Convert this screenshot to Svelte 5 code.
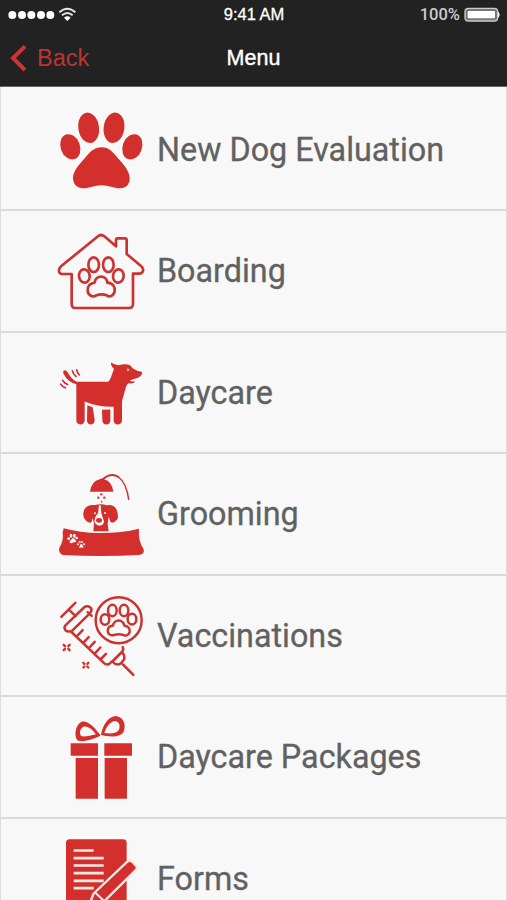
<script>
  const items = [
    { icon: 'paw', label: 'New Dog Evaluation', top: -31.5 },
    { icon: 'house', label: 'Boarding', top: -42 },
    { icon: 'dog', label: 'Daycare', top: -52.5 },
    { icon: 'groom', label: 'Grooming', top: -33 },
    { icon: 'vaccine', label: 'Vaccinations', top: -28.5 },
    { icon: 'gift', label: 'Daycare Packages', top: -24 },
    { icon: 'form', label: 'Forms', top: 25.5 }
  ];
</script>

<div class="screen">
  <header>
    <div class="status">
      <div class="signal">
        <svg width="70" height="16" viewBox="0 0 210 48">
          <g fill="#fff">
            <circle cx="13" cy="24" r="12" />
            <circle cx="42" cy="24" r="12" />
            <circle cx="70" cy="24" r="12" />
            <circle cx="99" cy="24" r="12" />
            <circle cx="127" cy="24" r="12" />
          </g>
          <g fill="none" stroke="#e4e4e4" stroke-width="6">
            <path d="M154 16 Q178 -5 202 16" />
            <path d="M162 25 Q178 11 194 25" />
          </g>
          <path d="M168 32 Q178 24 188 32 L178 42 Z" fill="#fff" />
        </svg>
      </div>
      <div class="time">9:41 AM</div>
      <div class="battery">
        <span>100%</span>
        <svg width="36" height="16" viewBox="0 0 108 48">
          <rect x="3" y="4" width="98" height="38" rx="10" fill="#777" stroke="#ccc" stroke-width="4" />
          <rect x="11" y="12" width="82" height="22" rx="3" fill="#fff" />
          <path d="M103 15 Q109 23 103 31 Z" fill="#fff" stroke="#fff" stroke-width="2" />
        </svg>
      </div>
    </div>
    <nav>
      <button class="back">
        <svg width="17" height="28" viewBox="0 0 51 84">
          <path d="M48 7 L12 42 L48 78" fill="none" stroke="#cc3531" stroke-width="12" />
        </svg>
        <span>Back</span>
      </button>
      <h1>Menu</h1>
    </nav>
  </header>

  <ul>
    {#each items as { icon, label, top }}
      <li>
        <svg class="icon" viewBox="0 {top} 330 358.5">
          {#if icon === 'paw'}
            <g class="fill">
              <ellipse cx="116" cy="82" rx="31" ry="46" transform="rotate(-8 116 82)" />
              <ellipse cx="192" cy="82" rx="31" ry="46" transform="rotate(8 192 82)" />
              <ellipse cx="61" cy="139" rx="29" ry="39" transform="rotate(-20 61 139)" />
              <ellipse cx="247" cy="139" rx="29" ry="39" transform="rotate(20 247 139)" />
              <path d="M155 140 C173 140 185 150 197 165 C216 188 239 208 239 234 C239 250 230 262 214 263 C194 265 178 254 154 254 C131 254 116 265 96 263 C79 262 69 249 69 232 C69 209 93 187 111 165 C124 149 137 140 155 140 Z" />
            </g>
          {:else if icon === 'house'}
            <g class="line" stroke-width="8">
              <path d="M65 147 H37 Q26 147 27 134 Q28 128 34 123 L144 34 Q153 26 163 34 L198 64 V45 Q198 40 203 40 H225 Q230 40 230 45 V87 L273 123 Q281 129 279 137 Q277 146 267 146 H249 V237 Q249 249 237 249 H76 Q65 249 65 237 Z" />
              <ellipse cx="131" cy="119" rx="16" ry="22" />
              <ellipse cx="175" cy="119" rx="16" ry="22" />
              <ellipse cx="103" cy="153" rx="16" ry="20" transform="rotate(-8 103 153)" />
              <ellipse cx="205" cy="153" rx="16" ry="20" transform="rotate(8 205 153)" />
              <path d="M153 155 C163 155 171 162 172 173 C189 174 196 186 194 199 C191 214 178 217 170 211 Q155 205 139 211 C128 218 115 212 113 198 C111 184 121 174 134 173 C135 162 143 155 153 155 Z" />
            </g>
          {:else if icon === 'dog'}
            <path class="fill" d="M40 61 Q46 56 53 65 Q63 85 80 94 H173 Q179 91 184 77 L192 55 Q182 48 183 36 Q193 43 205 44 Q227 38 240 44 Q251 59 271 63 Q278 64 276 70 Q271 83 250 86 L239 90 Q246 95 255 92 Q252 101 235 98 Q228 104 225 120 L216 152 V211 Q214 222 203 222 Q193 221 191 212 V169 Q145 170 104 153 V211 Q102 222 91 222 Q80 221 79 211 V101 Q54 96 40 69 Z" />
            <path class="fill" d="M112 164 L128 170 L134 208 Q134 221 123 222 Q112 222 111 211 Z M156 178 L181 177 V211 Q180 222 169 222 Q157 221 157 209 Z" />
            <circle cx="234" cy="58" r="4" fill="#f4a09d" />
            <path class="line" stroke-width="5" d="M67 61 Q70 72 78 78 M80 58 Q81 66 88 73 M38 90 Q43 98 53 102 M32 101 Q37 108 46 112" />
          {:else if icon === 'groom'}
            <g class="fill">
              <path d="M120 80 Q124 49 149 43 Q155 38 162 43 Q186 49 190 80 Z" />
              <circle cx="154" cy="88" r="3.5" />
              <circle cx="145" cy="98" r="3.5" />
              <circle cx="163" cy="98" r="3.5" />
              <circle cx="155" cy="110" r="2.5" />
              <path d="M135 120 Q154 115 170 121 Q189 116 199 132 Q207 153 202 163 Q192 176 182 172 L176 155 L173 178 L176 199 H130 L132 176 L128 158 Q126 178 115 172 Q98 162 100 143 Q105 117 135 120 Z" />
              <path d="M41 190 Q96 205 153 204 Q215 204 267 191 Q264 228 281 253 Q285 268 267 270 Q154 276 39 270 Q24 265 28 248 Q42 228 38 202 Z" />
            </g>
            <path class="line" stroke-width="6" d="M157 44 Q183 21 205 36" />
            <path class="line" stroke-width="4.5" d="M205 36 Q229 53 236 103" />
            <path d="M147 121 L144 145 Q132 157 134 173 Q141 182 149 182 Q161 182 162 169 L154 145 L152 121 Z" fill="#f8f8f8" />
            <ellipse class="fill" cx="147" cy="166" rx="9" ry="7" />
            <circle cx="135" cy="145" r="3" fill="#f8f8f8" />
            <circle cx="165" cy="144" r="3" fill="#f8f8f8" />
            <g fill="#f8f8f8">
              <ellipse cx="63" cy="212" rx="4" ry="6" />
              <ellipse cx="73" cy="212" rx="4" ry="6" />
              <circle cx="56" cy="221" r="4" />
              <circle cx="80" cy="219" r="4" />
              <path d="M68 219 Q75 220 79 231 Q71 231 66 234 Q58 237 59 229 Z" />
              <circle cx="89" cy="231" r="3" />
              <circle cx="96" cy="231" r="3" />
              <circle cx="84" cy="238" r="3" />
              <circle cx="102" cy="238" r="3" />
              <path d="M92 236 Q101 240 100 248 Q92 247 87 248 Z" />
            </g>
          {:else if icon === 'vaccine'}
            <g class="line" stroke-width="7.5">
              <circle cx="206" cy="104" r="69" />
              <ellipse cx="187" cy="75" rx="13" ry="17" />
              <ellipse cx="222" cy="75" rx="13" ry="17" />
              <ellipse cx="165" cy="102" rx="13" ry="16" />
              <ellipse cx="246" cy="101" rx="13" ry="16" />
              <path d="M206 105 C214 105 221 112 223 120 C235 122 241 130 239 140 C236 151 225 152 219 148 Q206 144 193 148 C184 152 174 147 173 137 C173 127 180 121 189 120 C190 111 198 105 206 105 Z" />
              <path d="M34 94 L76 52 M57 73 L77 92 M125 91 L113 80 M66 136 L121 82 Q128 73 121 66 Q111 59 102 66 L47 119 Q40 127 47 135 Q55 141 66 136 M66 141 L162 233 Q170 240 178 235 L188 226 M79 154 L98 134 M99 173 L116 155 M116 189 L134 169 M133 205 L151 186 M151 222 L168 205 M187 228 L217 198 Q222 191 218 185 M187 228 Q200 243 213 233 L222 222 Q226 210 216 200 M219 237 L250 268" />
            </g>
            <path class="line" stroke-width="7" d="M41 178 L45 182 M59 178 L55 182 M41 194 L45 190 M59 194 L55 190 M100 232 L103 235 M115 232 L112 235 M100 246 L103 243 M115 246 L112 243" />
          {:else if icon === 'gift'}
            <path class="fill" d="M62 115 H144 V152 H62 Z M163 115 H246 V152 H163 Z M77 159 H144 V281 H77 Z M164 159 H231 V281 H164 Z" />
            <path class="fill" fill-rule="evenodd" d="M152 91 C134 68 114 46 96 50 C76 56 70 98 85 107 C103 112 133 103 152 91 Z M138 88 C121 92 101 97 93 93 C87 81 91 69 101 65 C115 62 129 76 138 88 Z M153 90 C158 60 174 36 196 33 C218 34 229 55 222 77 C214 99 178 96 153 90 Z M163 84 C181 87 199 86 207 74 C212 60 206 48 194 48 C179 51 168 68 163 84 Z" />
          {:else}
            <rect class="fill" x="48" y="86" width="182" height="250" rx="11" />
            <path d="M71 120 H131 M71 143 H161 M71 165 H161 M71 188 H161 M71 211 H161 M71 233 H131" stroke="#fbe9e6" stroke-width="8" />
            <path class="fill" d="M131 249 L231 154 Q240 147 247 154 L259 167 Q264 173 257 179 L160 275 L112 296 Z" stroke="#fbe9e6" stroke-width="7" />
            <path d="M136 247 L166 275" stroke="#fbe9e6" stroke-width="6" />
          {/if}
        </svg>
        <span class="label">{label}</span>
      </li>
    {/each}
  </ul>
</div>

<style>
  .screen {
    width: 507px;
    height: 900px;
    overflow: hidden;
    background: #f8f8f8;
    font-family: Roboto, sans-serif;
  }

  header {
    height: 87px;
    box-sizing: border-box;
    background: #222;
    border-bottom: 1px solid #666;
    color: #fff;
    font-family: "Liberation Sans", Arial, sans-serif;
  }

  .status {
    display: grid;
    grid-template-columns: 1fr auto 1fr;
    align-items: center;
    height: 29px;
    padding: 0 7px 0 8px;
  }

  .signal {
    display: flex;
  }

  .time {
    font-size: 16.5px;
    -webkit-text-stroke: 0.3px #fff;
  }

  .battery {
    display: flex;
    justify-content: flex-end;
    align-items: center;
    gap: 4px;
    color: #ccc;
    font-family: Roboto, sans-serif;
    font-size: 16.5px;
    font-weight: 500;
  }

  nav {
    display: grid;
    grid-template-columns: 1fr auto 1fr;
    align-items: center;
    height: 57px;
    padding: 0 9px;
  }

  .back {
    display: flex;
    align-items: center;
    gap: 11px;
    justify-self: start;
    padding: 1px 0 0;
    border: 0;
    background: none;
    color: #bd3434;
    font-family: inherit;
    font-size: 23.5px;
  }

  h1 {
    margin: 0;
    padding-top: 2px;
    font-size: 21.5px;
    font-weight: 400;
    -webkit-text-stroke: 0.4px #fff;
  }

  ul {
    margin: 0;
    padding: 2.5px 0 0;
    list-style: none;
    border-left: 1px solid #ddd;
    border-right: 1px solid #ddd;
  }

  li {
    display: flex;
    align-items: center;
    box-sizing: border-box;
    height: 121.5px;
    padding-left: 49px;
    border-bottom: 2px solid #dadada;
  }

  .icon {
    flex: none;
    width: 110px;
    height: 119.5px;
  }

  .fill {
    fill: #d32f2c;
  }

  .line {
    fill: none;
    stroke: #cb3331;
    stroke-linecap: round;
    stroke-linejoin: round;
  }

  .label {
    margin-left: -3px;
    padding-top: 1px;
    color: #616161;
    font-size: 32.3px;
    -webkit-text-stroke: 0.3px #616161;
    white-space: nowrap;
  }
</style>
